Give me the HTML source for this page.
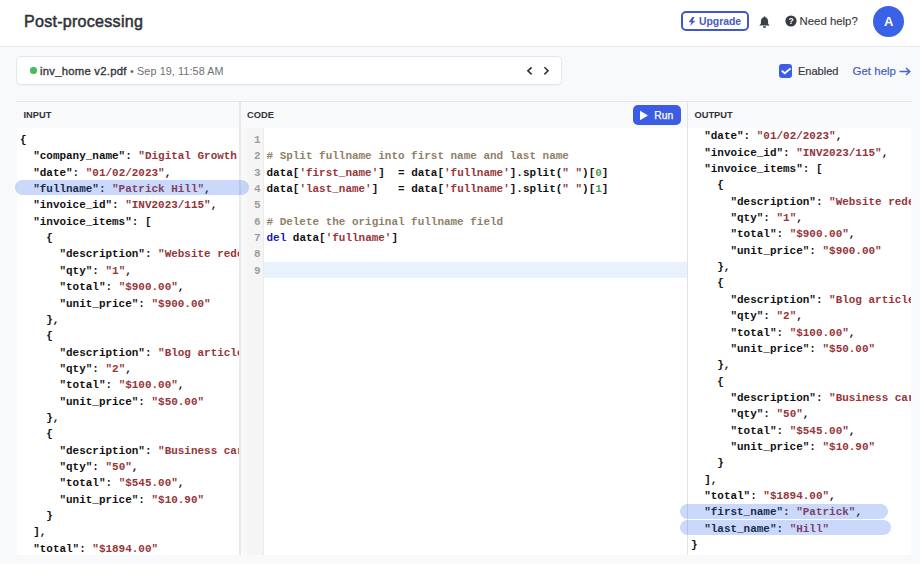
<!DOCTYPE html>
<html><head><meta charset="utf-8">
<style>
*{box-sizing:border-box;margin:0;padding:0}
html,body{width:920px;height:564px;overflow:hidden;background:#f8f9fb;font-family:"Liberation Sans",sans-serif;color:#333;position:relative}
.abs{position:absolute}
.hdr{position:absolute;left:0;top:0;width:920px;height:47px;background:#fff;border-bottom:1px solid #e9eaec}
.title{position:absolute;left:24px;top:8.4px;font-size:16.1px;letter-spacing:0.25px;font-weight:normal;-webkit-text-stroke:0.5px #2f3237;color:#2f3237;line-height:26px;white-space:nowrap}
.upg{position:absolute;left:681px;top:11px;width:68px;height:20px;border:2px solid #4058cc;border-radius:5px;color:#4559c4;font-size:10.4px;font-weight:bold;line-height:17px;white-space:nowrap}
.help{position:absolute;left:785px;top:13.4px;font-size:11.4px;color:#393c42;-webkit-text-stroke:0.15px #393c42;line-height:17px;white-space:nowrap}
.avatar{position:absolute;left:873.3px;top:5.8px;width:31px;height:31px;border-radius:50%;background:#3a62e6;color:#fff;font-size:13px;font-weight:bold;text-align:center;line-height:31px}
.card{position:absolute;left:16px;top:55.8px;width:546px;height:29.6px;background:#fff;border:1px solid #e5e6e9;border-radius:4.5px;box-shadow:0 1px 1px rgba(0,0,0,0.03)}
.fname{position:absolute;left:40px;top:62.5px;font-size:11.3px;letter-spacing:0.25px;font-weight:normal;-webkit-text-stroke:0.35px #34373c;color:#34373c;line-height:16px;white-space:nowrap}
.fdate{color:#6b6f75;font-weight:normal;font-size:10.8px;-webkit-text-stroke:0;letter-spacing:0.1px}
.en{position:absolute;left:798px;top:62.9px;font-size:11px;-webkit-text-stroke:0.2px #35383d;color:#35383d;line-height:16px}
.gh{position:absolute;left:852.5px;top:63.2px;font-size:11.5px;color:#4a5fbd;-webkit-text-stroke:0.2px #4a5fbd;line-height:16px;white-space:nowrap}
.lbl{position:absolute;top:108.6px;font-size:9.3px;font-weight:bold;color:#2f3237;line-height:12px;letter-spacing:0px}
.mono{font-family:"Liberation Mono",monospace;font-size:10.96px;font-weight:bold;white-space:pre}
.ln{position:absolute;line-height:16.31px;height:16.31px}
.k{color:#111}
.s{color:#963539}
.c{color:#8f8068}
.kw{color:#1a1ab8}
.n{color:#4c9a4c}
.p{color:#111}
.pill{position:absolute;background:rgba(50,105,232,0.26);border-radius:8px;z-index:5}
.gut{color:#9d9d9d;font-weight:bold}
</style></head>
<body>
<div class="hdr"></div>
<div class="title">Post-processing</div>
<div class="upg"><svg class="abs" style="left:5.2px;top:3.8px" width="8" height="9" viewBox="0 0 8 10"><path d="M4.4 0 L0.3 5.7 H3.4 L1.8 10 L7.7 4.1 H4.6 L6.8 0 Z" fill="#4058cc"/></svg><span class="abs" style="left:16px;top:0px">Upgrade</span></div>
<svg class="abs" style="left:758px;top:14.5px" width="13" height="14" viewBox="0 0 13 14"><path d="M6.5 1.3 C7 1.3 7.3 1.7 7.3 2.2 C9.2 2.7 10.1 4.4 10.1 6.5 V8.3 C10.1 9.1 10.8 9.7 11.6 10.2 V10.6 H1.4 V10.2 C2.2 9.7 2.9 9.1 2.9 8.3 V6.5 C2.9 4.4 3.8 2.7 5.7 2.2 C5.7 1.7 6 1.3 6.5 1.3 Z" fill="#3b3f46"/><path d="M5 11.2 H8 C8 12.2 7.3 13 6.5 13 C5.7 13 5 12.2 5 11.2 Z" fill="#3b3f46"/></svg>
<svg class="abs" style="left:784.8px;top:15.3px" width="12" height="12" viewBox="0 0 12 12"><circle cx="6" cy="6" r="5.6" fill="#363a41"/><text x="6" y="9.2" font-family="Liberation Sans" font-weight="bold" font-size="8.5" fill="#fff" text-anchor="middle">?</text></svg>
<div class="help" style="left:799.5px">Need help?</div>
<div class="avatar">A</div>

<div class="card"></div>
<div class="abs" style="left:30px;top:67.4px;width:6.5px;height:6.5px;border-radius:50%;background:#4cba5e"></div>
<div class="fname">inv_home v2.pdf <span class="fdate">• Sep 19, 11:58 AM</span></div>
<svg class="abs" style="left:526px;top:66px" width="24" height="10" viewBox="0 0 24 10"><path d="M5.6 1.3 L1.9 4.8 L5.6 8.4" fill="none" stroke="#2f3237" stroke-width="1.6"/><path d="M18.4 1.3 L22 4.8 L18.4 8.4" fill="none" stroke="#2f3237" stroke-width="1.6"/></svg>

<div class="abs" style="left:778.7px;top:63.9px;width:13.8px;height:13.8px;border-radius:3px;background:#3c5cea"></div>
<svg class="abs" style="left:778.7px;top:63.9px" width="14" height="14" viewBox="0 0 14 14"><path d="M2.8 6.7 L5.8 9.3 L11.6 4.4" fill="none" stroke="#fff" stroke-width="1.8"/></svg>
<div class="en">Enabled</div>
<div class="gh">Get help <svg style="position:relative;top:1px" width="12" height="9" viewBox="0 0 12 9"><path d="M0.5 4.5 H10.5 M7 1 L10.8 4.5 L7 8" fill="none" stroke="#4562d6" stroke-width="1.5"/></svg></div>

<!-- panels -->
<div class="abs" style="left:16px;top:101px;width:896px;height:1px;background:#e3e5e9"></div>
<div class="abs" style="left:17px;top:128px;width:222px;height:427px;background:#fff"></div>
<div class="abs" style="left:239px;top:102px;width:2px;height:453px;background:#e8e9eb"></div>
<div class="abs" style="left:241px;top:128px;width:23px;height:427px;background:#f5f5f5;border-right:1px solid #ebebeb"></div>
<div class="abs" style="left:241px;top:128px;width:5.5px;height:427px;background:#f9f9f9"></div>
<div class="abs" style="left:264px;top:128px;width:423px;height:427px;background:#fff"></div>
<div class="abs" style="left:687px;top:102px;width:1px;height:453px;background:#e2e3e6"></div>
<div class="abs" style="left:688px;top:128px;width:223px;height:427px;background:#fff"></div>

<div class="lbl" style="left:23.5px">INPUT</div>
<div class="lbl" style="left:247px">CODE</div>
<div class="lbl" style="left:694.5px">OUTPUT</div>

<div class="abs" style="left:632.5px;top:105.3px;width:48.3px;height:19.4px;border-radius:5px;background:#3b5ce3"></div>
<svg class="abs" style="left:638.5px;top:110px" width="10" height="11" viewBox="0 0 10 11"><path d="M1 0.8 L9 5.5 L1 10.2 Z" fill="#fff"/></svg>
<div class="abs" style="left:654.3px;top:107.8px;font-size:10.3px;color:#fff;line-height:16px;-webkit-text-stroke:0.25px #fff">Run</div>

<!-- code current line -->
<div class="abs" style="left:264px;top:262.4px;width:423px;height:15.8px;background:#e9f1fc"></div>

<div id="content">
<div class="abs" style="left:17px;top:128px;width:222.4px;height:427px;overflow:hidden">
<div class="ln mono" style="left:3.00px;top:4.00px"><span class="p">{</span></div>
<div class="ln mono" style="left:3.00px;top:20.35px">  <span class="k">"company_name"</span><span class="p">: </span><span class="s">"Digital Growth Agency"</span><span class="p">,</span></div>
<div class="ln mono" style="left:3.00px;top:36.70px">  <span class="k">"date"</span><span class="p">: </span><span class="s">"01/02/2023"</span><span class="p">,</span></div>
<div class="ln mono" style="left:3.00px;top:53.05px">  <span class="k">"fullname"</span><span class="p">: </span><span class="s">"Patrick Hill"</span><span class="p">,</span></div>
<div class="ln mono" style="left:3.00px;top:69.40px">  <span class="k">"invoice_id"</span><span class="p">: </span><span class="s">"INV2023/115"</span><span class="p">,</span></div>
<div class="ln mono" style="left:3.00px;top:85.75px">  <span class="k">"invoice_items"</span><span class="p">: </span><span class="p">[</span><span class="p"></span></div>
<div class="ln mono" style="left:3.00px;top:102.10px">    <span class="p">{</span></div>
<div class="ln mono" style="left:3.00px;top:118.45px">      <span class="k">"description"</span><span class="p">: </span><span class="s">"Website redesign"</span><span class="p">,</span></div>
<div class="ln mono" style="left:3.00px;top:134.80px">      <span class="k">"qty"</span><span class="p">: </span><span class="s">"1"</span><span class="p">,</span></div>
<div class="ln mono" style="left:3.00px;top:151.15px">      <span class="k">"total"</span><span class="p">: </span><span class="s">"$900.00"</span><span class="p">,</span></div>
<div class="ln mono" style="left:3.00px;top:167.50px">      <span class="k">"unit_price"</span><span class="p">: </span><span class="s">"$900.00"</span><span class="p"></span></div>
<div class="ln mono" style="left:3.00px;top:183.85px">    <span class="p">},</span></div>
<div class="ln mono" style="left:3.00px;top:200.20px">    <span class="p">{</span></div>
<div class="ln mono" style="left:3.00px;top:216.55px">      <span class="k">"description"</span><span class="p">: </span><span class="s">"Blog article"</span><span class="p">,</span></div>
<div class="ln mono" style="left:3.00px;top:232.90px">      <span class="k">"qty"</span><span class="p">: </span><span class="s">"2"</span><span class="p">,</span></div>
<div class="ln mono" style="left:3.00px;top:249.25px">      <span class="k">"total"</span><span class="p">: </span><span class="s">"$100.00"</span><span class="p">,</span></div>
<div class="ln mono" style="left:3.00px;top:265.60px">      <span class="k">"unit_price"</span><span class="p">: </span><span class="s">"$50.00"</span><span class="p"></span></div>
<div class="ln mono" style="left:3.00px;top:281.95px">    <span class="p">},</span></div>
<div class="ln mono" style="left:3.00px;top:298.30px">    <span class="p">{</span></div>
<div class="ln mono" style="left:3.00px;top:314.65px">      <span class="k">"description"</span><span class="p">: </span><span class="s">"Business cards"</span><span class="p">,</span></div>
<div class="ln mono" style="left:3.00px;top:331.00px">      <span class="k">"qty"</span><span class="p">: </span><span class="s">"50"</span><span class="p">,</span></div>
<div class="ln mono" style="left:3.00px;top:347.35px">      <span class="k">"total"</span><span class="p">: </span><span class="s">"$545.00"</span><span class="p">,</span></div>
<div class="ln mono" style="left:3.00px;top:363.70px">      <span class="k">"unit_price"</span><span class="p">: </span><span class="s">"$10.90"</span><span class="p"></span></div>
<div class="ln mono" style="left:3.00px;top:380.05px">    <span class="p">}</span></div>
<div class="ln mono" style="left:3.00px;top:396.40px">  <span class="p">],</span></div>
<div class="ln mono" style="left:3.00px;top:412.75px">  <span class="k">"total"</span><span class="p">: </span><span class="s">"$1894.00"</span><span class="p"></span></div>
<div class="ln mono" style="left:3.00px;top:429.10px"><span class="p">}</span></div>
</div>
<div class="pill" style="left:14.6px;top:180.25px;width:234.90px;height:15.20px"></div>
<div class="ln mono" style="left:266.50px;top:131.80px"></div>
<div class="ln mono gut" style="left:241px;width:19.5px;text-align:right;top:131.80px">1</div>
<div class="ln mono" style="left:266.50px;top:148.15px"><span class="c"># Split fullname into first name and last name</span></div>
<div class="ln mono gut" style="left:241px;width:19.5px;text-align:right;top:148.15px">2</div>
<div class="ln mono" style="left:266.50px;top:164.50px"><span class="p">data[</span><span class="s">'first_name'</span><span class="p">]  = data[</span><span class="s">'fullname'</span><span class="p">].split(</span><span class="s">" "</span><span class="p">)[</span><span class="n">0</span><span class="p">]</span></div>
<div class="ln mono gut" style="left:241px;width:19.5px;text-align:right;top:164.50px">3</div>
<div class="ln mono" style="left:266.50px;top:180.85px"><span class="p">data[</span><span class="s">'last_name'</span><span class="p">]   = data[</span><span class="s">'fullname'</span><span class="p">].split(</span><span class="s">" "</span><span class="p">)[</span><span class="n">1</span><span class="p">]</span></div>
<div class="ln mono gut" style="left:241px;width:19.5px;text-align:right;top:180.85px">4</div>
<div class="ln mono" style="left:266.50px;top:197.20px"></div>
<div class="ln mono gut" style="left:241px;width:19.5px;text-align:right;top:197.20px">5</div>
<div class="ln mono" style="left:266.50px;top:213.55px"><span class="c"># Delete the original fullname field</span></div>
<div class="ln mono gut" style="left:241px;width:19.5px;text-align:right;top:213.55px">6</div>
<div class="ln mono" style="left:266.50px;top:229.90px"><span class="kw">del</span><span class="p"> data[</span><span class="s">'fullname'</span><span class="p">]</span></div>
<div class="ln mono gut" style="left:241px;width:19.5px;text-align:right;top:229.90px">7</div>
<div class="ln mono" style="left:266.50px;top:246.25px"></div>
<div class="ln mono gut" style="left:241px;width:19.5px;text-align:right;top:246.25px">8</div>
<div class="ln mono" style="left:266.50px;top:262.60px"></div>
<div class="ln mono gut" style="left:241px;width:19.5px;text-align:right;top:262.60px">9</div>
<div class="abs" style="left:688px;top:128px;width:223px;height:427px;overflow:hidden">
<div class="ln mono" style="left:3.00px;top:-32.40px"><span class="p">{</span></div>
<div class="ln mono" style="left:3.00px;top:-16.05px">  <span class="k">"company_name"</span><span class="p">: </span><span class="s">"Digital Growth Agency"</span><span class="p">,</span></div>
<div class="ln mono" style="left:3.00px;top:0.30px">  <span class="k">"date"</span><span class="p">: </span><span class="s">"01/02/2023"</span><span class="p">,</span></div>
<div class="ln mono" style="left:3.00px;top:16.65px">  <span class="k">"invoice_id"</span><span class="p">: </span><span class="s">"INV2023/115"</span><span class="p">,</span></div>
<div class="ln mono" style="left:3.00px;top:33.00px">  <span class="k">"invoice_items"</span><span class="p">: </span><span class="p">[</span><span class="p"></span></div>
<div class="ln mono" style="left:3.00px;top:49.35px">    <span class="p">{</span></div>
<div class="ln mono" style="left:3.00px;top:65.70px">      <span class="k">"description"</span><span class="p">: </span><span class="s">"Website redesign"</span><span class="p">,</span></div>
<div class="ln mono" style="left:3.00px;top:82.05px">      <span class="k">"qty"</span><span class="p">: </span><span class="s">"1"</span><span class="p">,</span></div>
<div class="ln mono" style="left:3.00px;top:98.40px">      <span class="k">"total"</span><span class="p">: </span><span class="s">"$900.00"</span><span class="p">,</span></div>
<div class="ln mono" style="left:3.00px;top:114.75px">      <span class="k">"unit_price"</span><span class="p">: </span><span class="s">"$900.00"</span><span class="p"></span></div>
<div class="ln mono" style="left:3.00px;top:131.10px">    <span class="p">},</span></div>
<div class="ln mono" style="left:3.00px;top:147.45px">    <span class="p">{</span></div>
<div class="ln mono" style="left:3.00px;top:163.80px">      <span class="k">"description"</span><span class="p">: </span><span class="s">"Blog article"</span><span class="p">,</span></div>
<div class="ln mono" style="left:3.00px;top:180.15px">      <span class="k">"qty"</span><span class="p">: </span><span class="s">"2"</span><span class="p">,</span></div>
<div class="ln mono" style="left:3.00px;top:196.50px">      <span class="k">"total"</span><span class="p">: </span><span class="s">"$100.00"</span><span class="p">,</span></div>
<div class="ln mono" style="left:3.00px;top:212.85px">      <span class="k">"unit_price"</span><span class="p">: </span><span class="s">"$50.00"</span><span class="p"></span></div>
<div class="ln mono" style="left:3.00px;top:229.20px">    <span class="p">},</span></div>
<div class="ln mono" style="left:3.00px;top:245.55px">    <span class="p">{</span></div>
<div class="ln mono" style="left:3.00px;top:261.90px">      <span class="k">"description"</span><span class="p">: </span><span class="s">"Business cards"</span><span class="p">,</span></div>
<div class="ln mono" style="left:3.00px;top:278.25px">      <span class="k">"qty"</span><span class="p">: </span><span class="s">"50"</span><span class="p">,</span></div>
<div class="ln mono" style="left:3.00px;top:294.60px">      <span class="k">"total"</span><span class="p">: </span><span class="s">"$545.00"</span><span class="p">,</span></div>
<div class="ln mono" style="left:3.00px;top:310.95px">      <span class="k">"unit_price"</span><span class="p">: </span><span class="s">"$10.90"</span><span class="p"></span></div>
<div class="ln mono" style="left:3.00px;top:327.30px">    <span class="p">}</span></div>
<div class="ln mono" style="left:3.00px;top:343.65px">  <span class="p">],</span></div>
<div class="ln mono" style="left:3.00px;top:360.00px">  <span class="k">"total"</span><span class="p">: </span><span class="s">"$1894.00"</span><span class="p">,</span></div>
<div class="ln mono" style="left:3.00px;top:376.35px">  <span class="k">"first_name"</span><span class="p">: </span><span class="s">"Patrick"</span><span class="p">,</span></div>
<div class="ln mono" style="left:3.00px;top:392.70px">  <span class="k">"last_name"</span><span class="p">: </span><span class="s">"Hill"</span><span class="p"></span></div>
<div class="ln mono" style="left:3.00px;top:409.05px"><span class="p">}</span></div>
</div>
<div class="pill" style="left:680.1px;top:503.55px;width:207.90px;height:15.20px"></div>
<div class="pill" style="left:680.1px;top:519.90px;width:210.90px;height:15.20px"></div>
</div>
</body></html>
